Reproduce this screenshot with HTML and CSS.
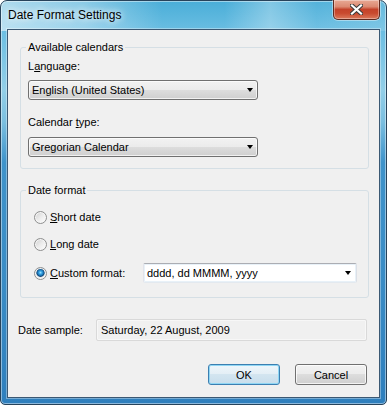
FILE: index.html
```html
<!DOCTYPE html>
<html lang="en">

<head>
    <meta charset="UTF-8">
    <title>Date Format Settings</title>
    <link rel="stylesheet" href="styles.css">
</head>

<body>
    <div class="window">
        <div class="titlebar">
            <span class="title">Date Format Settings</span>
            <button class="close-button" aria-label="Close">
                <svg width="13" height="11" viewBox="0 0 13 11">
                    <path d="M2 1.5 L11 9.5 M11 1.5 L2 9.5" stroke="#3b3b3b" stroke-width="4.2" stroke-linecap="square" fill="none"/>
                    <path d="M2 1.5 L11 9.5 M11 1.5 L2 9.5" stroke="#ffffff" stroke-width="2.2" stroke-linecap="square" fill="none"/>
                </svg>
            </button>
        </div>
        <div class="client">
            <fieldset class="group group-calendars">
                <legend>Available calendars</legend>
                <label class="field-label">L<u>a</u>nguage:</label>
                <div class="combo">English (United States)<span class="arrow"></span></div>
                <label class="field-label second">Calendar <u>t</u>ype:</label>
                <div class="combo combo-second">Gregorian Calendar<span class="arrow"></span></div>
            </fieldset>

            <fieldset class="group group-format">
                <legend>Date format</legend>
                <div class="radio-row">
                    <span class="radio"></span>
                    <span class="radio-label"><u>S</u>hort date</span>
                </div>
                <div class="radio-row">
                    <span class="radio"></span>
                    <span class="radio-label"><u>L</u>ong date</span>
                </div>
                <div class="radio-row custom-row">
                    <span class="radio checked"></span>
                    <span class="radio-label custom-label"><u>C</u>ustom format:</span>
                    <div class="edit-combo">dddd, dd MMMM, yyyy<span class="arrow"></span></div>
                </div>
            </fieldset>

            <div class="sample-row">
                <span class="sample-label">Date sample:</span>
                <div class="sample-box">Saturday, 22 August, 2009</div>
            </div>

            <div class="buttons">
                <button class="btn btn-default">OK</button>
                <button class="btn">Cancel</button>
            </div>
        </div>
    </div>
</body>

</html>
```

FILE: styles.css
```css
body {
    margin: 0;
    font-family: 'Liberation Sans', Arial, sans-serif;
    font-size: 11px;
    color: #000;
    background: #fff;
}

.window {
    width: 387px;
    height: 405px;
    box-sizing: border-box;
    display: flex;
    flex-direction: column;
    padding: 0 6px 6px;
    border: 1px solid #27435b;
    border-radius: 7px 7px 5px 5px;
    background:
        linear-gradient(to right, rgba(255, 255, 255, 0.55) 0%, rgba(255, 255, 255, 0.35) 22%, rgba(255, 255, 255, 0) 42%, rgba(255, 255, 255, 0) 58%, rgba(255, 255, 255, 0.3) 70%, rgba(255, 255, 255, 0.05) 82%, rgba(255, 255, 255, 0.15) 100%) top / 100% 30px no-repeat,
        linear-gradient(to bottom, #4aaed8 0%, #6dbfe3 8%, #93cfe8 22%, #7bbfe0 30%, #3f93ca 40%, #3a8cc5 70%, #2f7fbd 100%);
    box-shadow: inset 0 0 0 1px rgba(255, 255, 255, 0.45);
}

.titlebar {
    height: 28px;
    display: flex;
    align-items: flex-start;
    justify-content: space-between;
    padding-left: 1px;
}

.title {
    font-size: 12px;
    line-height: 28px;
    text-shadow: 0 0 6px rgba(255, 255, 255, 0.95), 0 0 10px rgba(255, 255, 255, 0.8);
}

.close-button {
    width: 47px;
    height: 20px;
    margin-top: -1px;
    padding: 0;
    display: flex;
    align-items: center;
    justify-content: center;
    border: 1px solid #5e2a20;
    border-top: none;
    border-radius: 0 0 5px 5px;
    background: linear-gradient(to bottom, #e8a994 0%, #dc8a72 35%, #c4432a 50%, #c94a2f 70%, #db7a5c 100%);
    box-shadow: inset 0 0 0 1px rgba(255, 255, 255, 0.35), 0 0 0 1px rgba(255, 255, 255, 0.4);
}

.client {
    flex: 1;
    display: flex;
    flex-direction: column;
    border: 1px solid #3b5873;
    background: #f0f0f0;
    box-shadow: 0 0 0 1px rgba(255, 255, 255, 0.35);
}

.group {
    box-sizing: border-box;
    width: 349px;
    margin: 0 0 0 12px;
    border: 1px solid #d5dfe5;
    border-radius: 3px;
    min-width: 0;
}

.group legend {
    padding: 0 2px;
    margin-left: -2px;
    line-height: 16px;
}

.group-calendars {
    margin-top: 9px;
    padding: 3px 10px 11px 7px;
}

.group-format {
    margin-top: 13px;
    padding: 11px 10px 14px 7px;
}

.field-label {
    display: block;
    line-height: 16px;
}

.field-label.second {
    margin-top: 14px;
}

.combo {
    box-sizing: border-box;
    width: 230px;
    height: 20px;
    margin-top: 6px;
    display: flex;
    align-items: center;
    justify-content: space-between;
    padding: 0 4px 0 3px;
    border: 1px solid #707070;
    border-radius: 3px;
    background: linear-gradient(to bottom, #f2f2f2 0%, #ebebeb 50%, #dddddd 50%, #cfcfcf 100%);
    box-shadow: inset 0 0 0 1px rgba(255, 255, 255, 0.7);
}

.combo-second {
    margin-top: 7px;
}

.arrow {
    width: 0;
    height: 0;
    border-left: 3.5px solid transparent;
    border-right: 3.5px solid transparent;
    border-top: 4px solid #000;
}

.radio-row {
    display: flex;
    align-items: center;
    height: 16px;
}

.radio-row + .radio-row {
    margin-top: 11px;
}

.custom-row {
    height: 20px;
}

.radio {
    box-sizing: border-box;
    width: 13px;
    height: 13px;
    margin-left: 6px;
    border: 1px solid #8e8f8f;
    border-radius: 50%;
    background: linear-gradient(135deg, #cfcfcf 0%, #ececec 50%, #ffffff 100%);
    box-shadow: inset 0 0 0 1px #f6f6f6;
}

.radio.checked {
    background: radial-gradient(circle at 50% 42%, #9fe2ff 0, #37a6e6 1.5px, #1a6fae 3px, #0d3f6e 3.8px, #9ab3c6 4.3px, #e6e6e6 4.8px, #fbfbfb 6px);
}

.radio-label {
    margin-left: 3px;
    line-height: 16px;
}

.custom-label {
    width: 93px;
}

.edit-combo {
    box-sizing: border-box;
    width: 214px;
    height: 20px;
    display: flex;
    align-items: center;
    justify-content: space-between;
    padding: 0 5px 0 3px;
    border: 1px solid;
    border-color: #abadb3 #dbdfe6 #e3e9ef #e2e3ea;
    border-radius: 2px;
    background: #fff;
    box-shadow: inset 0 0 0 1px rgba(190, 215, 235, 0.35);
}

.sample-row {
    display: flex;
    align-items: center;
    margin-top: 21px;
    margin-left: 10px;
}

.sample-label {
    width: 78px;
    line-height: 16px;
}

.sample-box {
    box-sizing: border-box;
    width: 271px;
    height: 22px;
    display: flex;
    align-items: center;
    padding: 0 4px;
    border: 1px solid #d9d9d9;
    border-radius: 2px;
    background: #f0f0f0;
    box-shadow: inset 0 0 0 1px #f7f7f7;
}

.buttons {
    display: flex;
    justify-content: flex-end;
    gap: 15px;
    margin-top: 23px;
    margin-right: 12px;
}

.btn {
    box-sizing: border-box;
    width: 72px;
    height: 21px;
    padding: 0;
    font-family: inherit;
    font-size: 11px;
    color: #000;
    border: 1px solid #707070;
    border-radius: 3px;
    background: linear-gradient(to bottom, #f2f2f2 0%, #ebebeb 50%, #dddddd 50%, #cfcfcf 100%);
    box-shadow: inset 0 0 0 1px rgba(255, 255, 255, 0.75);
}

.btn-default {
    border-color: #3c7fb1;
    background: linear-gradient(to bottom, #eef6fb 0%, #e3eef5 50%, #d3e5f0 50%, #c8deec 100%);
    box-shadow: inset 0 0 0 1px #8fd6f4;
}
```
